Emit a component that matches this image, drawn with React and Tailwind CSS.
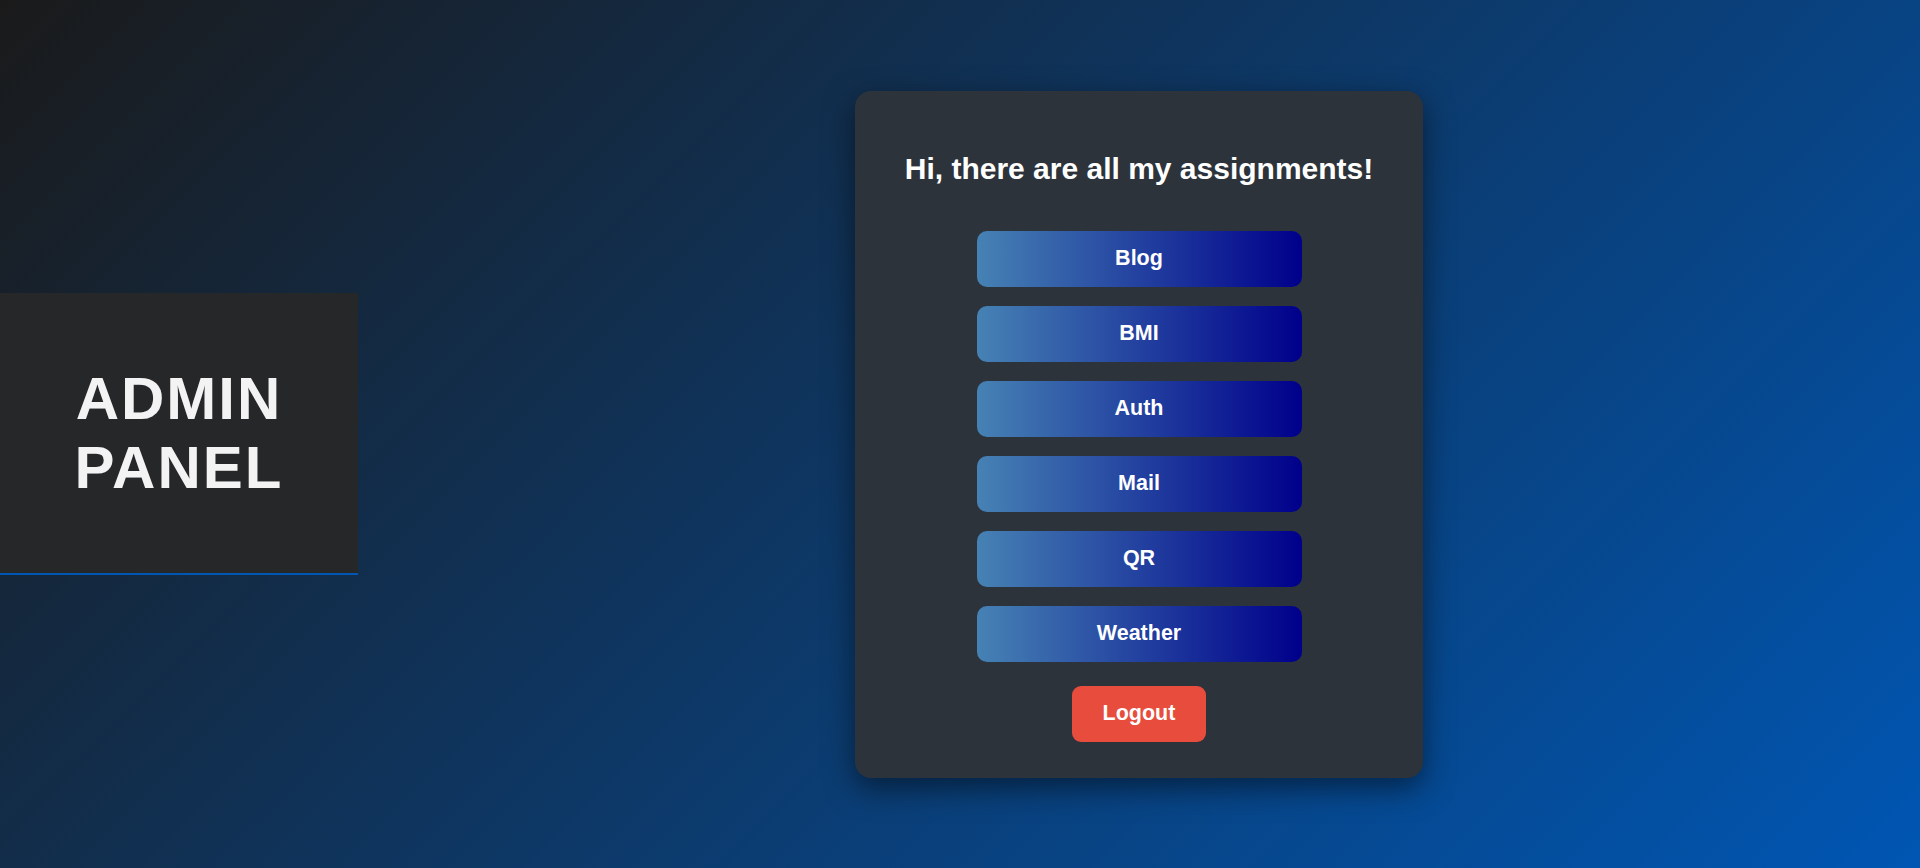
const links = ['Blog', 'BMI', 'Auth', 'Mail', 'QR', 'Weather'];

function Sidebar() {
  return (
    <aside className="w-[358px] shrink-0 h-[282px] bg-[#262729] border-b-2 border-[#0056b3] flex items-center justify-center">
      <h1 className="text-[60px] leading-[69px] font-bold tracking-[2px] text-[#f3f3f3] text-center">
        ADMIN
        <br />
        PANEL
      </h1>
    </aside>
  );
}

function Dashboard() {
  return (
    <div className="w-[568px] bg-[#2d333b] rounded-2xl shadow-[0_10px_30px_rgba(0,0,0,0.5)] pt-[60px] pb-[36px] flex flex-col items-center">
      <h2 className="text-[30px] leading-[35px] font-bold text-white mb-[45px]">
        Hi, there are all my assignments!
      </h2>
      <div className="flex flex-col gap-[19px]">
        {links.map((name) => (
          <button
            key={name}
            className="w-[325px] h-[56px] rounded-[10px] bg-[linear-gradient(to_right,#4682b4,#00008b)] text-white text-[21.5px] font-bold"
          >
            {name}
          </button>
        ))}
      </div>
      <button className="mt-[24px] h-[56px] px-[31px] rounded-[9px] bg-[#e74c3c] text-white text-[21.5px] font-bold">
        Logout
      </button>
    </div>
  );
}

export default function App() {
  return (
    <div className="min-h-screen h-[868px] flex items-center bg-[linear-gradient(135deg,#1a1a1a,#0056b3)] font-['Liberation_Sans',Arial,sans-serif]">
      <Sidebar />
      <main className="flex-1 flex items-center justify-center">
        <Dashboard />
      </main>
    </div>
  );
}
